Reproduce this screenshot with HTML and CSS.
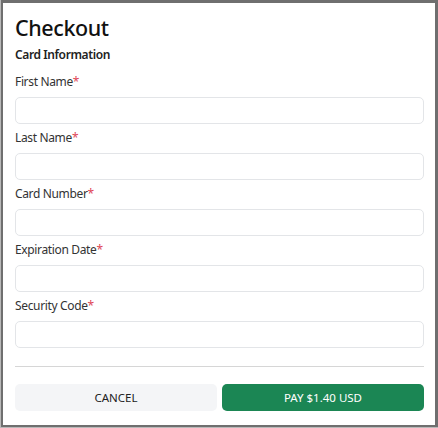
FILE: index.html
```html
<!DOCTYPE html>
<html lang="en">
<head>
<meta charset="utf-8">
<title>Checkout</title>
<link rel="stylesheet" href="styles.css">
</head>
<body>
<div class="frame">
  <div class="modal">
    <h1 class="title">Checkout</h1>
    <h2 class="subtitle">Card Information</h2>
    <form class="form">
      <div class="field">
        <label class="label">First Name<span class="req">*</span></label>
        <input class="input" type="text">
      </div>
      <div class="field">
        <label class="label">Last Name<span class="req">*</span></label>
        <input class="input" type="text">
      </div>
      <div class="field">
        <label class="label">Card Number<span class="req">*</span></label>
        <input class="input" type="text">
      </div>
      <div class="field">
        <label class="label">Expiration Date<span class="req">*</span></label>
        <input class="input" type="text">
      </div>
      <div class="field">
        <label class="label">Security Code<span class="req">*</span></label>
        <input class="input" type="text">
      </div>
    </form>
    <hr class="divider">
    <div class="actions">
      <button class="btn btn-cancel" type="button">CANCEL</button>
      <button class="btn btn-pay" type="button">PAY $1.40 USD</button>
    </div>
  </div>
</div>
</body>
</html>
```

FILE: styles.css
```css
html, body {
  margin: 0;
  padding: 0;
  background: #b9b9b9;
}
body {
  width: 438px;
  height: 428px;
  font-family: "Noto Sans", "Open Sans", sans-serif;
  color: #212529;
}
.frame {
  box-sizing: border-box;
  width: 437px;
  height: 427px;
  margin: 0 0 0 1px;
  border: 2px solid #6f6f6f;
  border-top-width: 3px;
  border-right-width: 3px;
  background: #ffffff;
}
.modal {
  padding: 0 11px 0 12px;
}
.title {
  margin: 0;
  padding-top: 10px;
  font-size: 21.5px;
  line-height: 30px;
  font-weight: 500;
  color: #111;
  letter-spacing: -0.4px;
}
.subtitle {
  margin: 4px 0 0;
  font-size: 12px;
  line-height: 16px;
  font-weight: 600;
  color: #222;
  letter-spacing: -0.4px;
}
.form {
  display: flex;
  flex-direction: column;
  gap: 6px;
  margin-top: 11px;
}
.field {
  display: flex;
  flex-direction: column;
  gap: 7px;
}
.label {
  font-size: 12px;
  line-height: 16px;
  color: #333;
  letter-spacing: -0.35px;
}
.req {
  color: #e04656;
}
.input {
  box-sizing: border-box;
  height: 27px;
  width: 100%;
  margin: 0;
  border: 1px solid #e3e5e8;
  border-radius: 5px;
  background: #fff;
}
.divider {
  margin: 18px 0 0;
  border: 0;
  border-top: 1px solid #d6d6d6;
}
.actions {
  display: grid;
  grid-template-columns: 1fr 1fr;
  gap: 5px;
  margin-top: 17px;
}
.btn {
  height: 27px;
  border: 0;
  border-radius: 5px;
  font-family: "Noto Sans", "Open Sans", sans-serif;
  font-size: 11.5px;
  padding: 0;
}
.btn-cancel {
  background: #f4f5f7;
  color: #222;
}
.btn-pay {
  background: #1b8654;
  color: #fff;
}
```
